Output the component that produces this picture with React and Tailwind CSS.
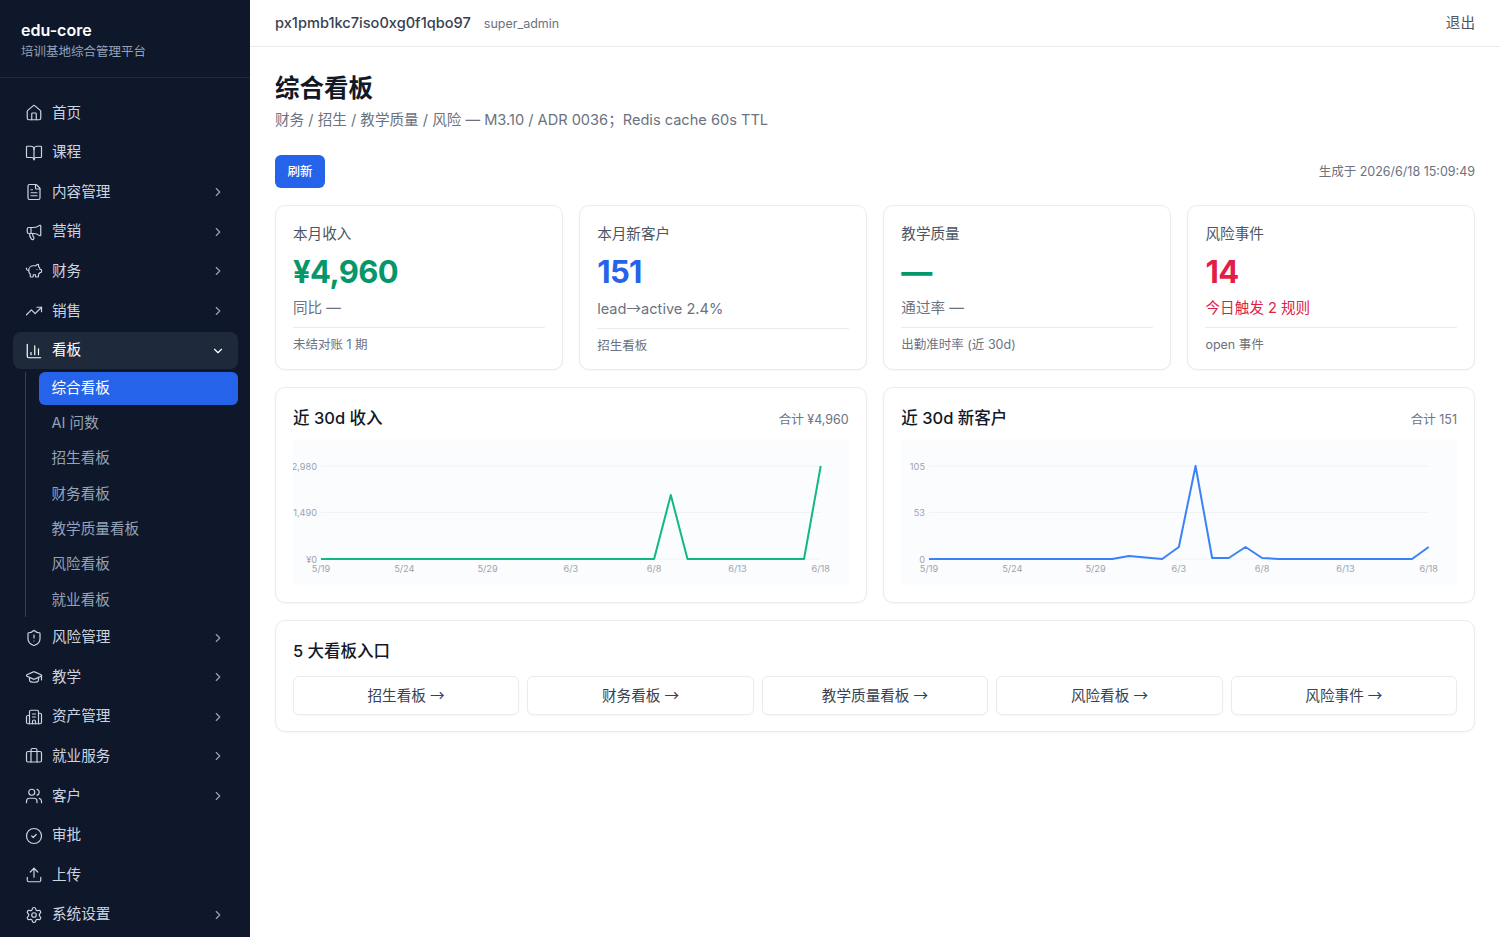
import React from 'react';
import {
  House, BookOpen, FileText, Megaphone, PiggyBank, TrendingUp, ChartColumn, ShieldAlert,
  GraduationCap, Building2, Briefcase, Users, CircleCheck, Upload, Settings,
  ChevronRight, ChevronDown,
} from 'lucide-react';

const navTop = [
  { icon: House, label: '首页' },
  { icon: BookOpen, label: '课程' },
  { icon: FileText, label: '内容管理', more: true },
  { icon: Megaphone, label: '营销', more: true },
  { icon: PiggyBank, label: '财务', more: true },
  { icon: TrendingUp, label: '销售', more: true },
];

const navBottom = [
  { icon: ShieldAlert, label: '风险管理', more: true },
  { icon: GraduationCap, label: '教学', more: true },
  { icon: Building2, label: '资产管理', more: true },
  { icon: Briefcase, label: '就业服务', more: true },
  { icon: Users, label: '客户', more: true },
  { icon: CircleCheck, label: '审批' },
  { icon: Upload, label: '上传' },
  { icon: Settings, label: '系统设置', more: true },
];

const subNav = ['综合看板', 'AI 问数', '招生看板', '财务看板', '教学质量看板', '风险看板', '就业看板'];

const Arrow = () => <span className="font-['Noto_Sans_CJK_SC',sans-serif]">→</span>;

const stats = [
  { label: '本月收入', value: '¥4,960', color: 'text-[#059669]', sub: '同比 —', subColor: 'text-[#6b7280]', foot: '未结对账 1 期' },
  { label: '本月新客户', value: '151', color: 'text-[#2563eb]', sub: <>lead<Arrow />active 2.4%</>, subColor: 'text-[#6b7280]', foot: '招生看板' },
  { label: '教学质量', value: '—', color: 'text-[#059669]', sub: '通过率 —', subColor: 'text-[#6b7280]', foot: '出勤准时率 (近 30d)' },
  { label: '风险事件', value: '14', color: 'text-[#e11d48]', sub: '今日触发 2 规则', subColor: 'text-[#e11d48]', foot: 'open 事件' },
];

const ticks = [
  ['5/19', 0], ['5/24', 5], ['5/29', 10], ['6/3', 15], ['6/8', 20], ['6/13', 25], ['6/18', 30],
];

const revenue = Array(31).fill(120);
revenue[21] = 56;
revenue[30] = 27;

const customers = Array(31).fill(120);
customers[12] = 117;
customers[13] = 118.5;
customers[15] = 108;
customers[16] = 27;
customers[17] = 119;
customers[18] = 119;
customers[19] = 108;
customers[20] = 119;
customers[30] = 108;

const entries = ['招生看板', '财务看板', '教学质量看板', '风险看板', '风险事件'];

function NavItem({ icon: Icon, label, more, open }) {
  return (
    <div className={`flex h-[37px] items-center rounded-lg pl-[11.5px] pr-[13px] ${open ? 'bg-[#1e293b] text-white' : 'text-[#cbd5e1]'}`}>
      <Icon size={18} strokeWidth={1.6} className="shrink-0" />
      <span className="ml-[9.5px] flex-1 pt-[1px] text-[14.6px]">{label}</span>
      {open && <ChevronDown size={14} strokeWidth={2} />}
      {more && <ChevronRight size={14} strokeWidth={2} className="text-[#94a3b8]" />}
    </div>
  );
}

function Sidebar() {
  return (
    <aside className="flex h-[937px] w-[250px] shrink-0 flex-col overflow-hidden bg-[#0f172a]">
      <div className="h-[78px] shrink-0 border-b border-[#1e293b] px-[21px] pt-[20px]">
        <div className="text-[16px] leading-[20px] font-semibold text-white">edu-core</div>
        <div className="mt-[3px] text-[12.5px] leading-[18px] text-[#94a3b8]">培训基地综合管理平台</div>
      </div>
      <nav className="flex flex-col gap-[2.6px] pt-[16.6px] pr-[12px] pl-[13px]">
        {navTop.map((item) => <NavItem key={item.label} {...item} />)}
        <NavItem icon={ChartColumn} label="看板" open />
        <div className="ml-[12px] flex flex-col gap-[2.3px] border-l border-[#334155] pl-[13px]">
          {subNav.map((label, i) => (
            <div
              key={label}
              className={`flex h-[33px] items-center rounded-md px-[12.5px] pt-[1px] text-[14.6px] ${i === 0 ? 'bg-[#2563eb] text-white' : 'text-[#94a3b8]'}`}
            >
              {label}
            </div>
          ))}
        </div>
        {navBottom.map((item) => <NavItem key={item.label} {...item} />)}
      </nav>
    </aside>
  );
}

function StatCard({ label, value, color, sub, subColor, foot }) {
  return (
    <div className="h-[165px] rounded-[10px] border border-[#e9ebf0] bg-white px-[17px] pt-[18px] shadow-[0_1px_2px_rgba(0,0,0,0.04)]">
      <div className="text-[14.6px] leading-[20px] text-[#4b5563]">{label}</div>
      <div className={`mt-[9px] text-[31px] leading-[37px] font-bold tracking-[-0.6px] ${color}`}>{value}</div>
      <div className={`mt-[8px] text-[14.6px] leading-[20px] ${subColor}`}>{sub}</div>
      <div className="mt-[8.5px] border-t border-[#e9ebf0] pt-[8.5px] text-[12.5px] leading-[18px] text-[#6b7280]">{foot}</div>
    </div>
  );
}

function LineChart({ points, stroke, yLabels }) {
  const x0 = 28;
  const step = 500 / 30;
  const path = points.map((y, i) => `${(x0 + i * step).toFixed(1)},${y}`).join(' ');
  return (
    <svg viewBox="0 0 556 146" className="mt-[9px] block h-[146px] w-full bg-[#fbfcfe]">
      {[27, 73.5, 120].map((y, i) => (
        <g key={y}>
          <line x1={x0} x2={x0 + 500} y1={y} y2={y} stroke="#f0f2f5" strokeWidth="1.2" />
          <text x={x0 - 4} y={y + 4} textAnchor="end" fontSize="9.2" fill="#9ca3af">{yLabels[i]}</text>
        </g>
      ))}
      {ticks.map(([label, i]) => (
        <text key={label} x={x0 + i * step} y={133} textAnchor="middle" fontSize="9.2" fill="#9ca3af">{label}</text>
      ))}
      <polyline points={path} fill="none" stroke={stroke} strokeWidth="2" strokeLinejoin="round" />
    </svg>
  );
}

function ChartCard({ title, total, points, stroke, yLabels }) {
  return (
    <div className="h-[216px] rounded-[10px] border border-[#e9ebf0] bg-white px-[17px] pt-[18px] shadow-[0_1px_2px_rgba(0,0,0,0.04)]">
      <div className="flex items-baseline justify-between">
        <div className="text-[16.5px] leading-[24px] font-medium text-[#111827]">{title}</div>
        <div className="text-[12.5px] text-[#6b7280]">{total}</div>
      </div>
      <LineChart points={points} stroke={stroke} yLabels={yLabels} />
    </div>
  );
}

function App() {
  return (
    <div className="flex h-[937px] w-[1500px] overflow-hidden bg-white font-['Inter','Noto_Sans_CJK_SC',sans-serif]">
      <Sidebar />
      <main className="flex-1">
        <header className="flex h-[47px] items-center justify-between border-b border-[#e9ebf0] px-[25px] pt-[2px]">
          <div className="flex items-baseline gap-[13px]">
            <span className="text-[14.6px] font-medium text-[#374151]">px1pmb1kc7iso0xg0f1qbo97</span>
            <span className="text-[12.5px] text-[#6b7280]">super_admin</span>
          </div>
          <span className="text-[14.6px] text-[#4b5563]">退出</span>
        </header>
        <div className="px-[25px] pt-[25px]">
          <h1 className="text-[24.5px] leading-[32px] font-bold text-[#111827]">综合看板</h1>
          <p className="mt-[6px] text-[14.6px] leading-[20px] text-[#6b7280]">
            财务 / 招生 / 教学质量 / 风险 — M3.10 / ADR 0036；Redis cache 60s TTL
          </p>
          <div className="mt-[25px] flex items-center justify-between">
            <button className="h-[33px] w-[50px] rounded-md bg-[#2563eb] pt-[1px] text-[12.5px] font-medium text-white">刷新</button>
            <span className="pt-[2px] text-[12.5px] text-[#6b7280]">生成于 2026/6/18 15:09:49</span>
          </div>
          <div className="mt-[17px] grid grid-cols-4 gap-[16.6px]">
            {stats.map((s) => <StatCard key={s.label} {...s} />)}
          </div>
          <div className="mt-[17px] grid grid-cols-2 gap-[16.6px]">
            <ChartCard title="近 30d 收入" total="合计 ¥4,960" points={revenue} stroke="#10b981" yLabels={['2,980', '1,490', '¥0']} />
            <ChartCard title="近 30d 新客户" total="合计 151" points={customers} stroke="#3b82f6" yLabels={['105', '53', '0']} />
          </div>
          <div className="mt-[17px] h-[112px] rounded-[10px] border border-[#e9ebf0] bg-white px-[17px] pt-[18px] shadow-[0_1px_2px_rgba(0,0,0,0.04)]">
            <div className="text-[16.5px] leading-[24px] font-medium text-[#111827]">5 大看板入口</div>
            <div className="mt-[13px] grid grid-cols-5 gap-[8.3px]">
              {entries.map((label) => (
                <button key={label} className="h-[39px] rounded-md border border-[#e9ebf0] bg-white pt-[1px] text-[14.6px] text-[#374151] shadow-[0_1px_2px_rgba(0,0,0,0.03)]">
                  {label} <Arrow />
                </button>
              ))}
            </div>
          </div>
        </div>
      </main>
    </div>
  );
}

export default App;
